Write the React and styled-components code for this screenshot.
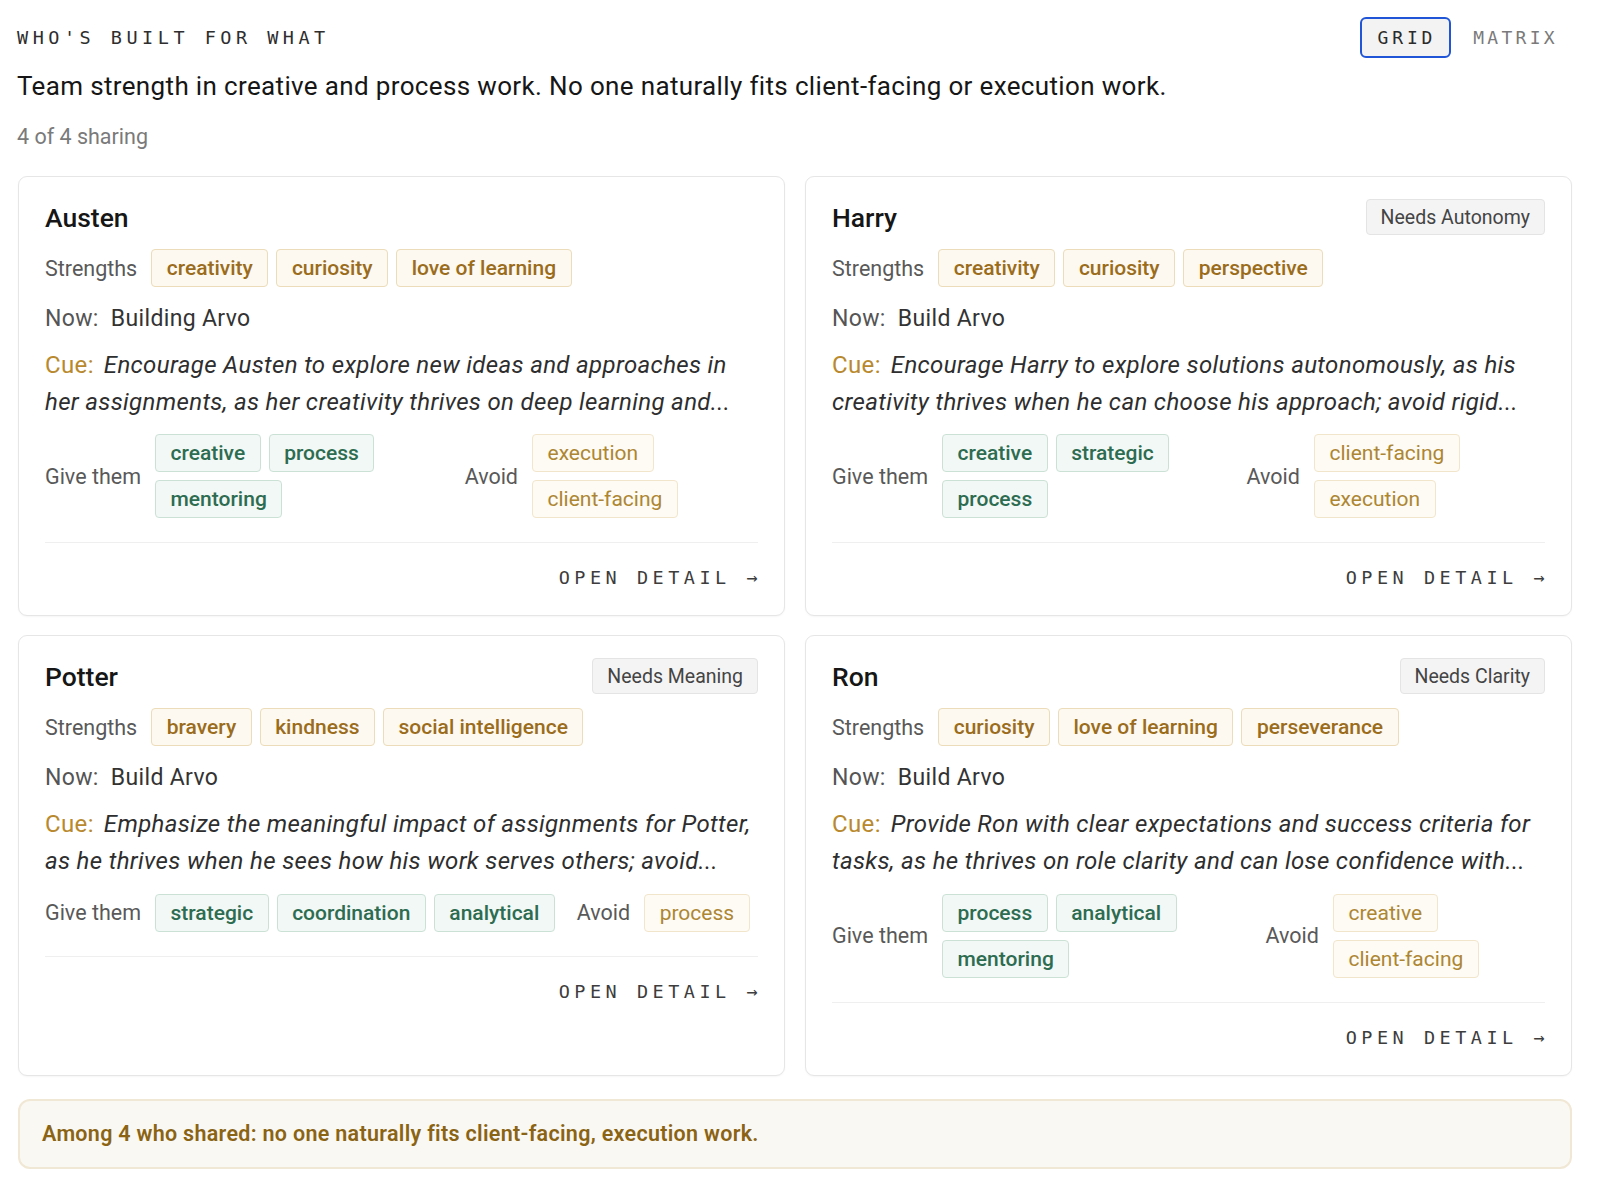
import React from "react";
import styled, { createGlobalStyle } from "styled-components";

const GlobalStyle = createGlobalStyle`
  html, body { margin: 0; padding: 0; background: #ffffff; }
  body { font-family: Roboto, "Noto Sans", Arial, sans-serif; color: #1c1c1c; }
  * { box-sizing: border-box; }
`;

const MONO = `"DejaVu Sans Mono", "Liberation Mono", monospace`;

const Page = styled.div`
  width: 1600px;
  padding: 17px 28px 24px 17px;
`;

const TopBar = styled.div`
  display: flex;
  align-items: center;
  justify-content: space-between;
  height: 41px;
`;

const Eyebrow = styled.div`
  font-family: ${MONO};
  font-size: 18.5px;
  letter-spacing: 4.5px;
  color: #2e2e2e;
`;

const Toggle = styled.div`
  display: flex;
  align-items: center;
  gap: 20px;
  margin-right: 12px;
`;

const ToggleBtn = styled.button`
  font-family: ${MONO};
  font-size: 18px;
  letter-spacing: ${(p) => (p.$active ? "3.8px" : "3.3px")};
  height: 41px;
  padding-left: ${(p) => (p.$active ? "16px" : "0")};
  padding-right: ${(p) => (p.$active ? "13px" : "0")};
  border-radius: 6px;
  border: ${(p) => (p.$active ? "2.5px solid #1f55d6" : "2.5px solid transparent")};
  background: ${(p) => (p.$active ? "#f3f3f3" : "transparent")};
  color: ${(p) => (p.$active ? "#2b2b2b" : "#7a7a7a")};
  cursor: pointer;
`;

const Headline = styled.h1`
  margin: 12px 0 0;
  font-size: 26px;
  letter-spacing: 0.35px;
  line-height: 32px;
  font-weight: 400;
  color: #161616;
`;

const Sharing = styled.div`
  margin-top: 21px;
  font-size: 21.5px;
  line-height: 28px;
  color: #7a7a7a;
`;

const Grid = styled.div`
  margin-top: 25px;
  margin-left: 1px;
  display: grid;
  grid-template-columns: 1fr 1fr;
  column-gap: 20px;
  row-gap: 19px;
  align-items: stretch;
`;

const Card = styled.div`
  display: flex;
  flex-direction: column;
  border: 1.5px solid #e6e6e6;
  border-radius: 9px;
  background: #fff;
  padding: 22px 26px 25px 26px;
  box-shadow: 0 1px 2px rgba(0, 0, 0, 0.04);
`;

const CardHead = styled.div`
  display: flex;
  align-items: center;
  justify-content: space-between;
  min-height: 36px;
`;

const Name = styled.div`
  font-size: 26.5px;
  font-weight: 500;
  color: #161616;
`;

const NeedBadge = styled.div`
  height: 36px;
  display: flex;
  align-items: center;
  padding: 0 14px;
  font-size: 19.5px;
  color: #444;
  background: #f4f4f4;
  border: 1.5px solid #e4e4e4;
  border-radius: 4px;
`;

const Row = styled.div`
  display: flex;
  align-items: center;
  gap: 14px;
  margin-top: ${(p) => p.$mt || 0}px;
`;

const Label = styled.span`
  font-size: 21.5px;
  color: #595959;
  flex-shrink: 0;
`;

const Chips = styled.div`
  display: flex;
  flex-wrap: wrap;
  gap: 8px 8px;
  min-width: 0;
`;

const chipTheme = {
  strength: { bg: "#fdf9f0", border: "#ecdcb9", color: "#9a6c1c", weight: 500 },
  give: { bg: "#f2f8f5", border: "#cce1d6", color: "#2d6c51", weight: 500 },
  avoid: { bg: "#fefbf4", border: "#f1e5cb", color: "#ad8633", weight: 400 },
};

const Chip = styled.span`
  height: 38px;
  display: inline-flex;
  align-items: center;
  padding: 0 14.5px;
  font-size: 21px;
  font-weight: ${(p) => chipTheme[p.$kind].weight};
  color: ${(p) => chipTheme[p.$kind].color};
  background: ${(p) => chipTheme[p.$kind].bg};
  border: 1.5px solid ${(p) => chipTheme[p.$kind].border};
  border-radius: 4px;
  white-space: nowrap;
`;

const NowLine = styled.div`
  margin-top: 17px;
  display: flex;
  gap: 12px;
  font-size: 23px;
  letter-spacing: 0.35px;
  line-height: 30px;
  color: #555;
`;

const NowValue = styled.span`
  color: #333;
`;

const Cue = styled.p`
  margin: 13px 0 0;
  font-size: 24px;
  letter-spacing: 0.35px;
  line-height: 36.7px;
  color: #2e2e2e;
`;

const CueLabel = styled.span`
  color: #b8892e;
  padding-right: 10px;
`;

const CueText = styled.span`
  font-style: italic;
`;

const FitRow = styled.div`
  margin-top: 14px;
  display: flex;
  align-items: center;
  gap: 22px;
`;

const FitGroup = styled.div`
  display: flex;
  align-items: center;
  gap: 14px;
  min-width: 0;
`;

const Footer = styled.div`
  margin-top: 24px;
  border-top: 1.5px solid #efefef;
  padding-top: 23px;
  display: flex;
  justify-content: flex-end;
`;

const OpenLink = styled.a`
  font-family: ${MONO};
  font-size: 18.5px;
  line-height: 24px;
  letter-spacing: 4.5px;
  color: #3d3d3d;
  text-decoration: none;
  margin-right: -4px;
`;

const Banner = styled.div`
  margin-top: 23px;
  margin-left: 1px;
  height: 70px;
  display: flex;
  align-items: center;
  padding: 0 22px;
  background: #faf8f3;
  border: 2px solid #f0e7d4;
  border-radius: 12px;
  font-size: 21.5px;
  letter-spacing: 0.3px;
  font-weight: 600;
  color: #8a6414;
`;

const people = [
  {
    name: "Austen",
    strengths: ["creativity", "curiosity", "love of learning"],
    now: "Building Arvo",
    cue: "Encourage Austen to explore new ideas and approaches in her assignments, as her creativity thrives on deep learning and...",
    give: ["creative", "process", "mentoring"],
    avoid: ["execution", "client-facing"],
  },
  {
    name: "Harry",
    need: "Needs Autonomy",
    strengths: ["creativity", "curiosity", "perspective"],
    now: "Build Arvo",
    cue: "Encourage Harry to explore solutions autonomously, as his creativity thrives when he can choose his approach; avoid rigid...",
    give: ["creative", "strategic", "process"],
    avoid: ["client-facing", "execution"],
  },
  {
    name: "Potter",
    need: "Needs Meaning",
    strengths: ["bravery", "kindness", "social intelligence"],
    now: "Build Arvo",
    cue: "Emphasize the meaningful impact of assignments for Potter, as he thrives when he sees how his work serves others; avoid...",
    give: ["strategic", "coordination", "analytical"],
    avoid: ["process"],
  },
  {
    name: "Ron",
    need: "Needs Clarity",
    strengths: ["curiosity", "love of learning", "perseverance"],
    now: "Build Arvo",
    cue: "Provide Ron with clear expectations and success criteria for tasks, as he thrives on role clarity and can lose confidence with...",
    give: ["process", "analytical", "mentoring"],
    avoid: ["creative", "client-facing"],
  },
];

function PersonCard({ p }) {
  return (
    <Card>
      <CardHead>
        <Name>{p.name}</Name>
        {p.need && <NeedBadge>{p.need}</NeedBadge>}
      </CardHead>
      <Row $mt={14}>
        <Label>Strengths</Label>
        <Chips>
          {p.strengths.map((s) => (
            <Chip key={s} $kind="strength">{s}</Chip>
          ))}
        </Chips>
      </Row>
      <NowLine>
        <span>Now:</span>
        <NowValue>{p.now}</NowValue>
      </NowLine>
      <Cue>
        <CueLabel>Cue:</CueLabel>
        <CueText>{p.cue}</CueText>
      </Cue>
      <FitRow>
        <FitGroup>
          <Label>Give them</Label>
          <Chips>
            {p.give.map((s) => (
              <Chip key={s} $kind="give">{s}</Chip>
            ))}
          </Chips>
        </FitGroup>
        <FitGroup>
          <Label>Avoid</Label>
          <Chips>
            {p.avoid.map((s) => (
              <Chip key={s} $kind="avoid">{s}</Chip>
            ))}
          </Chips>
        </FitGroup>
      </FitRow>
      <Footer>
        <OpenLink href="#">OPEN DETAIL →</OpenLink>
      </Footer>
    </Card>
  );
}

export default function App() {
  return (
    <>
      <GlobalStyle />
      <Page>
        <TopBar>
          <Eyebrow>WHO'S BUILT FOR WHAT</Eyebrow>
          <Toggle>
            <ToggleBtn $active>GRID</ToggleBtn>
            <ToggleBtn>MATRIX</ToggleBtn>
          </Toggle>
        </TopBar>
        <Headline>
          Team strength in creative and process work. No one naturally fits client-facing or execution work.
        </Headline>
        <Sharing>4 of 4 sharing</Sharing>
        <Grid>
          {people.map((p) => (
            <PersonCard key={p.name} p={p} />
          ))}
        </Grid>
        <Banner>Among 4 who shared: no one naturally fits client-facing, execution work.</Banner>
      </Page>
    </>
  );
}
